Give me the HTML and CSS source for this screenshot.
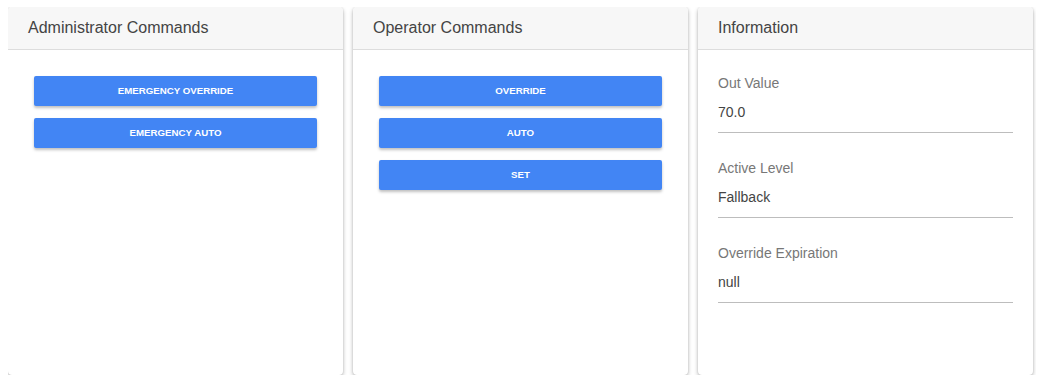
FILE: index.html
```html
<!DOCTYPE html>
<html lang="en">
<head>
	<meta charset="UTF-8">
	<title>Commands</title>
<link rel="stylesheet" href="styles.css">
</head>
<body>
	<div class="cards">
		<div class="card">
			<div class="card-head">Administrator Commands</div>
			<div class="card-body">
				<button class="btn">EMERGENCY OVERRIDE</button>
				<button class="btn">EMERGENCY AUTO</button>
			</div>
		</div>
		<div class="card">
			<div class="card-head">Operator Commands</div>
			<div class="card-body">
				<button class="btn">OVERRIDE</button>
				<button class="btn">AUTO</button>
				<button class="btn">SET</button>
			</div>
		</div>
		<div class="card">
			<div class="card-head">Information</div>
			<div class="card-body info">
				<div class="field">
					<div class="label">Out Value</div>
					<div class="value">70.0</div>
				</div>
				<div class="field">
					<div class="label">Active Level</div>
					<div class="value">Fallback</div>
				</div>
				<div class="field">
					<div class="label">Override Expiration</div>
					<div class="value">null</div>
				</div>
			</div>
		</div>
	</div>
</body>
</html>
```
FILE: styles.css
```css
body{
	margin: 7px 8px;
	font-family: "Liberation Sans", Arial, sans-serif;
	background: #fff;
}
.cards{
	display: flex;
	gap: 10px;
	width: 1025px;
}
.card{
	flex: 1;
	height: 368px;
	background: #fff;
	border-radius: 4px;
	box-shadow: 0 2px 4px rgba(0,0,0,0.28), 0 0 2px rgba(0,0,0,0.12);
	overflow: hidden;
	display: flex;
	flex-direction: column;
}
.card-head{
	height: 42px;
	line-height: 42px;
	padding-left: 20px;
	background: #f7f7f7;
	border-bottom: 1px solid #ddd;
	font-size: 16px;
	color: #444;
}
.card-body{
	padding: 26px 26px 0;
	display: flex;
	flex-direction: column;
	gap: 12px;
}
.btn{
	height: 30px;
	padding: 0 0 2px;
	border: none;
	border-radius: 2px;
	background: #4285f4;
	color: #fff;
	font-family: "Liberation Sans", Arial, sans-serif;
	font-size: 9.7px;
	font-weight: bold;
	box-shadow: 0 2px 3px rgba(0,0,0,0.25);
}
.info{
	padding: 25px 20px 0;
	gap: 27px;
}
.field{
	border-bottom: 1px solid #bdbdbd;
	padding-bottom: 11px;
	font-size: 14px;
	line-height: 17px;
}
.label{
	color: #777;
	margin-bottom: 12px;
}
.value{
	color: #444;
}
```
